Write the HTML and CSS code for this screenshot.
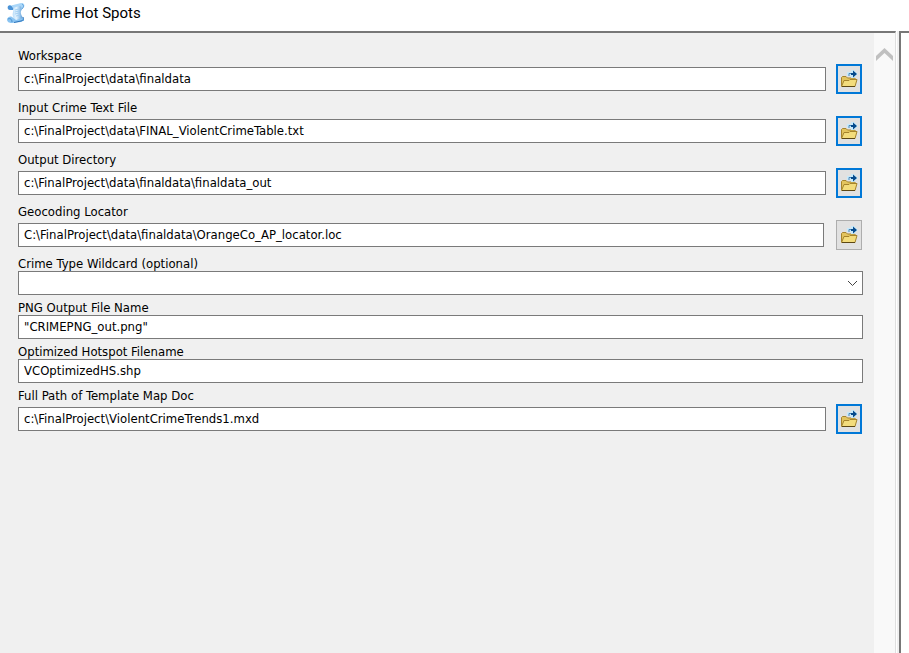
FILE: index.html
```html
<!DOCTYPE html>
<html lang="en">
<head>
<meta charset="UTF-8">
<title>Crime Hot Spots</title>
<link rel="stylesheet" href="styles.css">
</head>
<body>
<svg class="symbols" aria-hidden="true">
    <symbol id="folder" viewBox="0 0 18 18">
        <path d="M1.500 16V7.500L2.500 6.500H6L7.500 8H14.500L15.500 9V11" fill="#e3c45e" stroke="#a5832c"/>
        <path d="M1.500 16.500L4 10.500H9L10 9.500H17L15 16.500Z" fill="#f3dc7c" stroke="#a5832c"/>
        <path d="M2 16.500H15" stroke="#5c4714"/>
        <path d="M7 6V2H11V0H14L18 4L14 8H11V6Z" fill="#c8e9fa"/>
        <path d="M9 6V3.500H13" fill="none" stroke="#4b86b8"/>
        <path d="M11 3H13V0.500L17 4L13 7.500V5H11Z" fill="#064a8c"/>
    </symbol>
</svg>
<header class="title-bar">
    <svg class="logo" viewBox="0 0 20 22" aria-hidden="true">
        <defs>
            <linearGradient id="paper" x1="0" x2="1">
                <stop offset="0" stop-color="#9accf5"/>
                <stop offset="0.450" stop-color="#e4f4ff"/>
                <stop offset="1" stop-color="#3f8cd2"/>
            </linearGradient>
        </defs>
        <path d="M4 4C7 5 8 7 7 10C6 13 7 16 9 19L18 19C17 15 14 12 15 9C16 7 17 6 17 4Z" fill="url(#paper)"/>
        <path d="M2 4C1 6 2 8 4 8L7 8C8 6 6 4 4 3Z" fill="#4a92d6"/>
        <path d="M3 4L15 1C18 1 19 3 18 5L15 7C16 5 15 4 13 4L7 6C6 4 5 3 3 4Z" fill="#a9d6f8"/>
        <path d="M16 2C18 3 18 5 16 7" fill="none" stroke="#5a9edb"/>
        <path d="M1 17C2 15 4 14 6 15L10 18L17 16C19 17 18 19 15 20L6 21C3 21 1 20 1 17Z" fill="#8ac4f2"/>
        <path d="M2 17C4 16 6 17 6 20" fill="none" stroke="#4a90d0"/>
        <path d="M8 20.500L15 19C17 19 18 17 17 15" fill="none" stroke="#2e74ba"/>
        <path d="M9 8L13 7M9 10L13 9M9 12L13 11M10 14L14 13" stroke="#a3cff2"/>
    </svg>
    <h1>Crime Hot Spots</h1>
</header>
<div class="content">
    <main class="panel">
        <form class="params">
            <div class="field browse">
                <label for="workspace">Workspace</label>
                <div class="control">
                    <input type="text" id="workspace" value="c:\FinalProject\data\finaldata">
                    <button type="button" aria-label="Browse workspace"><svg><use href="#folder"/></svg></button>
                </div>
            </div>
            <div class="field browse">
                <label for="crimeFile">Input Crime Text File</label>
                <div class="control">
                    <input type="text" id="crimeFile" value="c:\FinalProject\data\FINAL_ViolentCrimeTable.txt">
                    <button type="button" aria-label="Browse crime text file"><svg><use href="#folder"/></svg></button>
                </div>
            </div>
            <div class="field browse">
                <label for="outputDir">Output Directory</label>
                <div class="control">
                    <input type="text" id="outputDir" value="c:\FinalProject\data\finaldata\finaldata_out">
                    <button type="button" aria-label="Browse output directory"><svg><use href="#folder"/></svg></button>
                </div>
            </div>
            <div class="field browse locator">
                <label for="locator">Geocoding Locator</label>
                <div class="control">
                    <input type="text" id="locator" value="C:\FinalProject\data\finaldata\OrangeCo_AP_locator.loc">
                    <button type="button" aria-label="Browse locator"><svg><use href="#folder"/></svg></button>
                </div>
            </div>
            <div class="field">
                <label for="crimeType">Crime Type Wildcard (optional)</label>
                <div class="select-box">
                    <select id="crimeType"><option value=""></option></select>
                    <svg viewBox="0 0 11 7" aria-hidden="true"><path d="M1 1L5.500 5.500L10 1"/></svg>
                </div>
            </div>
            <div class="field">
                <label for="pngName">PNG Output File Name</label>
                <input type="text" id="pngName" value="&quot;CRIMEPNG_out.png&quot;">
            </div>
            <div class="field">
                <label for="hotspotName">Optimized Hotspot Filename</label>
                <input type="text" id="hotspotName" value="VCOptimizedHS.shp">
            </div>
            <div class="field browse">
                <label for="mapDoc">Full Path of Template Map Doc</label>
                <div class="control">
                    <input type="text" id="mapDoc" value="c:\FinalProject\ViolentCrimeTrends1.mxd">
                    <button type="button" aria-label="Browse map document"><svg><use href="#folder"/></svg></button>
                </div>
            </div>
        </form>
        <div class="scroll-track">
            <button type="button" aria-label="Scroll up">
                <svg viewBox="0 0 17 13"><path d="M0 13V8L8.500 0L17 8V13L8.500 5Z"/></svg>
            </button>
        </div>
    </main>
    <div class="splitter"></div>
    <aside class="help-panel"></aside>
</div>
</body>
</html>
```
FILE: styles.css
```css
* {
    box-sizing: border-box;
}
body {
    margin: 0;
    min-height: 100vh;
    display: flex;
    flex-direction: column;
    background: #fff;
    color: #000;
    font-family: Tahoma, "DejaVu Sans Condensed", "Noto Sans", sans-serif;
    font-size: 13px;
}
.symbols {
    display: none;
}

/* title bar */
.title-bar {
    height: 31px;
    padding: 0 6px 6px;
    display: flex;
    align-items: center;
    gap: 5px;
}
.title-bar h1 {
    margin: 0;
    font-family: "Segoe UI", Roboto, sans-serif;
    font-size: 15px;
    font-weight: 400;
    line-height: 20px;
}
.logo {
    width: 20px;
    height: 22px;
}

.content {
    flex: 1;
    display: flex;
}
.panel {
    flex: 1;
    display: flex;
    background: #f0f0f0;
    border-top: 2px solid #777;
    border-right: 1px solid #dfdfdf;
}
.params {
    flex: 1;
    padding: 15px 11px 15px 18px;
}

/* parameter rows */
.field {
    margin-bottom: 5px;
}
.field.browse {
    margin-bottom: 6px;
}
.field label {
    display: block;
    line-height: 15px;
}
.field input,
.field select {
    display: block;
    width: 100%;
    height: 24px;
    margin: 0;
    padding: 0 5px 1px;
    border: 1px solid #7a7a7a;
    border-radius: 0;
    background: #fff;
    color: #000;
    font: inherit;
}
.control {
    display: flex;
    align-items: center;
    gap: 10px;
    padding: 1px 1px 0 0;
}
.control input {
    flex: 1;
    min-width: 0;
}
.control button {
    width: 26px;
    height: 30px;
    padding: 0;
    display: flex;
    align-items: center;
    justify-content: center;
    background: #e1e1e1;
    border: 2px solid #0078d7;
}
.control button svg {
    width: 18px;
    height: 18px;
}
.locator .control {
    gap: 12px;
}
.locator button {
    border: 1px solid #adadad;
}

.select-box {
    position: relative;
}
.select-box select {
    appearance: none;
}
.select-box svg {
    position: absolute;
    top: 9px;
    right: 5px;
    width: 11px;
    height: 7px;
    fill: none;
    stroke: #444;
    pointer-events: none;
}

/* scroll bar */
.scroll-track {
    width: 21px;
    background: #f9f9f9;
}
.scroll-track button {
    width: 21px;
    height: 40px;
    padding: 2px 0 0;
    display: flex;
    align-items: center;
    justify-content: center;
    background: none;
    border: none;
}
.scroll-track svg {
    width: 17px;
    height: 13px;
    fill: #c0c0c0;
}

.splitter {
    width: 3px;
    background: #f0f0f0;
    border-left: 1px solid #fff;
}
.help-panel {
    width: 10px;
    background: #fff;
    border-top: 2px solid #777;
    border-left: 2px solid #777;
}
```
